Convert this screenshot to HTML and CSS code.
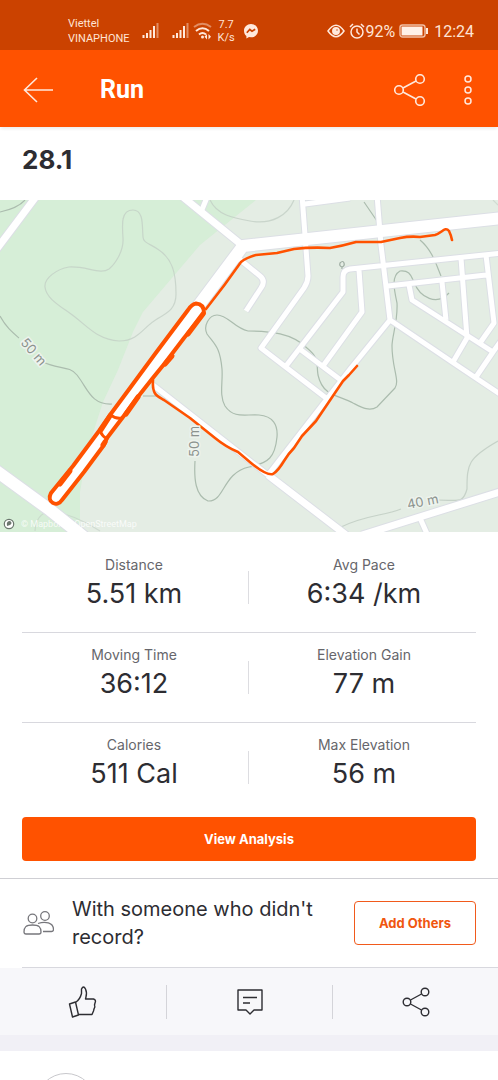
FILE: index.html
```html
<!DOCTYPE html>
<html lang="en">
<head>
<meta charset="utf-8">
<meta name="viewport" content="width=device-width, initial-scale=1">
<title>Run</title>
<link rel="stylesheet" href="styles.css">
</head>
<body>
<div class="status">
  <div class="carriers"><span>Viettel</span><span>VINAPHONE</span></div>
  <svg class="signals" width="72" height="18" viewBox="0 0 72 18" aria-hidden="true">
    <g stroke="#ffe9dc" stroke-width="2">
      <path d="M1.500 16v-3M5 16v-5M8.500 16v-8M12 16V4M31.500 16v-3M35 16v-5M38.500 16v-8M42 16V4"/>
      <path d="M15.500 16V1M45.500 16V1" opacity=".45"/>
    </g>
    <g fill="none" stroke="#ffe9dc" stroke-width="2">
      <path d="M52 5q8.500-6.500 17 0" opacity=".45"/>
      <path d="M54 9q6.500-5.500 13 0M57 12.500q3.500-3 7 0"/>
    </g>
    <circle cx="60.500" cy="15" r="1.500" fill="#ffe9dc"/>
    <path d="M65 12l-2.500 2.700 2.500 2.700zM66.500 12l2.500 2.700-2.500 2.700z" fill="#ffe9dc"/>
  </svg>
  <div class="speed"><span>7.7</span><span>K/s</span></div>
  <svg width="16" height="16" viewBox="0 0 16 16" aria-hidden="true">
    <path d="M8 1c4 0 7 3 7 6.700S12 14.300 8 14.300l-2-.2-2.600 1.300v-2.300C1.800 11.900 1 9.900 1 7.700 1 4 4 1 8 1z" fill="#ffe9dc"/>
    <path d="M3.800 9.800l3-3.300 2.200 1.700 3.200-2" fill="none" stroke="#cb4200" stroke-width="1.700"/>
  </svg>
  <div class="status-right">
    <svg width="18" height="14" viewBox="0 0 18 14" fill="none" stroke="#ffe9dc" stroke-width="1.500" aria-hidden="true">
      <path d="M1 7q8-11.500 16 0-8 11.500-16 0z"/><circle cx="9" cy="7" r="3.200" fill="#ffe9dc"/><circle cx="10" cy="6" r=".7" fill="#cb4200" stroke="none"/>
    </svg>
    <svg width="16" height="16" viewBox="0 0 16 16" fill="none" stroke="#ffe9dc" stroke-width="1.500" aria-hidden="true">
      <circle cx="8" cy="9" r="6"/><path d="M8 5.500V9l2.500 2.500M1 4l3-3M12 1l3 3"/>
    </svg>
    <span>92%</span>
    <svg class="battery" width="30" height="16" viewBox="0 0 30 16" aria-hidden="true">
      <rect x="1" y="2" width="25" height="12" rx="2.500" fill="none" stroke="#ffe9dc" stroke-width="1.400" opacity=".75"/>
      <rect x="2.500" y="3.500" width="21" height="9" fill="#fff1e9"/><rect x="27" y="5" width="2" height="6" fill="#ffe9dc"/>
    </svg>
    <span>12:24</span>
  </div>
</div>

<header class="topbar">
  <button class="icon-button" aria-label="Back"><svg width="30" height="26" viewBox="0 0 30 26" fill="none" stroke="#ffe9dc" stroke-width="1.600"><path d="M30 13H1.500M14 1L1.500 13 14 25"/></svg></button>
  <h1>Run</h1>
  <button class="icon-button" aria-label="Share"><svg width="32" height="32" viewBox="0 0 32 32" fill="none" stroke="#ffe9dc" stroke-width="1.600"><circle cx="5" cy="16" r="4.300"/><circle cx="26" cy="5" r="4.300"/><circle cx="26" cy="27" r="4.300"/><path d="M9 14l13-7M9 18l13 7"/></svg></button>
  <button class="icon-button more" aria-label="More options"><svg width="8" height="30" viewBox="0 0 8 30" fill="none" stroke="#ffe9dc" stroke-width="1.500"><circle cx="4" cy="4" r="3"/><circle cx="4" cy="15" r="3"/><circle cx="4" cy="26" r="3"/></svg></button>
</header>

<main>
  <h2 class="activity-name">28.1</h2>

  <svg class="map" viewBox="0 200 498 332" role="img" aria-label="Route map">
    <rect y="200" width="498" height="332" fill="#e4ede4"/>
    <path d="M0 200H256L200 245 143 312 133 332 118 370 103 402 87 452 80 492V532H0z" fill="#d6eed7"/>

    <g fill="none" stroke="#c2cec4" stroke-width="1.200">
      <path d="M0 212Q18 208 25 200" stroke="#abbcae"/>
      <path opacity=".75" d="M133 210c-12 0-11 14-10 28 1 14-9 27-14 31-9 6-22-3-40-2-12 2-25 11-24 20 1 12 17 20 30 30 14 11 24 23 44 24 20 0 24-14 38-22 12-7 19-11 19-25 0-22-4-35-17-44-8-6-16-7-16-13-1-11 1-27-10-27z"/>
      <path d="M210 200c7 15 23 18 40 21 22 4 38-6 44-21" opacity=".8"/>
      <path stroke="#abbcae" d="M0 316c6 11 12 16 19 22M41 361c17 9 28 4 36 14 11 14 14 30 35 29M143 396h14"/>
      <path stroke="#abbcae" d="M248 331c-14-3-20-16-31-16-8 0-14 11-10 19 8 11 13 13 15 35 1 14-3 26 3 37 9 13 20 8 34 9 14 1 19 10 18 22-2 20-8 26-28 30-27 6-24 35-41 34-13-5-14-23-13-40"/>
      <path stroke="#abbcae" d="M248 331c22 0 44 2 59 17 13 11 9 14 11 27 5 22 21 20 35 28 8 4 16 9 24 4l18-19c5-7-3-20-3-42 0-10 6-25 5-43-3-14-6-27 3-32 10-1 11 5 14 11 6 16 23 24 35 11M364 202l13 19M420 240c12 10 16 24 21 36"/>
      <path d="M341 527c24-12 42-11 60-18M437 500c22 0 26 4 30-11 0-25 1-31 31-48" opacity=".9"/>
      <path d="M35 531q1-17 15-20 24 3 50 20M493 200l5 5" opacity=".6"/>
      <path d="M340 263q3-3 4 0t-2 4q-3-1-2-4zM342 267v2" stroke="#9eaca2"/>
    </g>

    <defs>
      <g id="streets" fill="none" stroke-linejoin="round">
        <path d="M238 258L260 276Q266 281 261 288L246 311M302 195L305 235 308 276Q308 282 304 288L261 348 326 398M305 204L350 198M377 195L381 245 390 320 351 368 268 475M390 320L461 368 503 396M503 253L350 269Q343 270 343 277V292L286 366M359 270L362 312 323 366M301 350L342 381M388 286L486 275M461 258L467 338 453 362M486 255L494 323 480 343M442 282L446 320M409 285L412 300 493 352 503 338M493 352L476 377M208 195L201 212M420 518L428 536M153 385L268 475"/>
      </g>
      <g id="roads" fill="none">
        <path d="M-4 250L38 194M178 193L243 246M268 475L350 538M362 535L503 491"/>
      </g>
      <g id="mainroads" fill="none" stroke-linejoin="round">
        <path d="M-5 470L50 510 85 538M503 218L243 246 55 498"/>
      </g>
    </defs>
    <g stroke="#dcdfe5"><use href="#streets" stroke-width="7"/><use href="#roads" stroke-width="9"/><use href="#mainroads" stroke-width="14"/></g>
    <g stroke="#fff"><use href="#streets" stroke-width="5"/><use href="#roads" stroke-width="7"/><use href="#mainroads" stroke-width="12"/></g>

    <g fill="none" stroke="#ff5200" stroke-linejoin="round" stroke-linecap="round">
      <path stroke-width="2.600" d="M206 309Q225 285 241 262 246 258 256 255L277 253 294 249Q311 247 330 248 342 246 356 242L381 242 400 238Q410 236 420 237L435 235C442 233 445 226 449 231Q451 235 452 240"/>
      <path stroke-width="2.600" d="M153 380C152 395 157 396 164 400L190 418 215 438Q226 447 238 452L251 463Q267 476 273 474 278 471 284 461 288 454 294 448L302 436 316 421 343 381 349 375 357 366"/>
      <path id="laps" fill="#fff" stroke-width="4" d="M196 303.500Q192 304 188 310L155 354 130 388 110 415 99 431 73 466 51 493C46 502 57 508 62 500L84 472 104 445 107 438 123 417 137 398 152 379 165 363 184 338 204 313Q204 304 196 303.500z"/>
      <path stroke-width="5" d="M203 314L188 334M172 356L165 364M105 442L103 445M138 397L126 414M110 416L101 430M70 471L60 484"/>
      <path stroke-width="3" d="M111 415Q115 419 122 418M100 431Q102 436 107 439"/>
    </g>

    <g class="map-labels">
      <text transform="translate(20 343) rotate(49)">50 m</text>
      <text transform="translate(199 457) rotate(-90)">50 m</text>
      <text transform="translate(408 509) rotate(-11)">40 m</text>
    </g>
    <circle cx="9" cy="524" r="4.700" fill="#fff" stroke="#6b766e" stroke-width="1.200"/>
    <path d="M7 526q-1-5 3-5 3 2 0 4z" fill="#6b766e"/>
    <text class="credit" x="21" y="527">© Mapbox © OpenStreetMap</text>
  </svg>

  <dl class="stats">
    <div class="stat"><dt>Distance</dt><dd>5.51 km</dd></div>
    <div class="stat"><dt>Avg Pace</dt><dd>6:34 /km</dd></div>
    <div class="stat"><dt>Moving Time</dt><dd>36:12</dd></div>
    <div class="stat"><dt>Elevation Gain</dt><dd>77 m</dd></div>
    <div class="stat"><dt>Calories</dt><dd>511 Cal</dd></div>
    <div class="stat"><dt>Max Elevation</dt><dd>56 m</dd></div>
  </dl>

  <div class="analysis"><button class="primary">View Analysis</button></div>

  <section class="others">
    <svg width="32" height="24" viewBox="0 0 32 24" fill="none" stroke="#77777c" stroke-width="1.300" aria-hidden="true">
      <circle cx="10.500" cy="7.500" r="4.300"/><circle cx="23" cy="5" r="4.300"/>
      <path d="M4 23q-2 0-2-2c0-5 2-7 8.500-7s8.500 2 8.500 7q0 2-2 2zM16 12.500c7-2.500 15.500-1 15.500 6q0 2-2 2h-8.500"/>
    </svg>
    <p>With someone who didn't record?</p>
    <button class="outline">Add Others</button>
  </section>

  <div class="actions">
    <button aria-label="Give kudos"><svg width="30" height="32" viewBox="0 0 30 32" fill="none" stroke="#2d2d32" stroke-width="1.400" stroke-linejoin="round"><path d="M1.500 18l6-2 3 13-6 2zM7.500 16.500c3-2 5-5 6-9V3q2-4 4 0c2 4 1 6 0 10h8q3 1 1.500 4l-.5 2q1 2-.5 4l-.5 2-1.500 3.500h-13.500"/></svg></button>
    <button aria-label="Comment"><svg width="26" height="26" viewBox="0 0 26 26" fill="none" stroke="#2d2d32" stroke-width="1.400" stroke-linejoin="round"><path d="M1 1h24v20h-8l-4 4-4-4H1zM6 8.500h14M6 14h7"/></svg></button>
    <button aria-label="Share activity"><svg width="28" height="30" viewBox="0 0 28 30" fill="none" stroke="#2d2d32" stroke-width="1.400"><circle cx="5" cy="15" r="3.800"/><circle cx="23" cy="5" r="3.800"/><circle cx="23" cy="25" r="3.800"/><path d="M8.500 13l11-6M8.500 17l11 6"/></svg></button>
  </div>

  <section class="next-card"><div class="avatar"></div></section>
</main>
</body>
</html>
```
FILE: styles.css
```css
* { box-sizing: border-box; }
body {
  margin: 0;
  height: 100vh;
  display: flex;
  flex-direction: column;
  overflow: hidden;
  background: #fff;
  color: #2d2d32;
  font-family: Inter, "Liberation Sans", sans-serif;
}
button { margin: 0; padding: 0; border: 0; background: none; font: inherit; cursor: pointer; }
svg { display: block; flex: none; }
h1, h2, p, dl, dd { margin: 0; }

.status {
  display: flex;
  align-items: center;
  height: 50px;
  padding: 12px 24px 0 68px;
  background: #cb4200;
  color: #ffe4d5;
  font-family: Roboto, sans-serif;
}
.carriers, .speed { display: flex; flex-direction: column; font-size: 11px; line-height: 15px; }
.signals { margin-left: 12px; }
.speed { margin: 0 8px 0 4px; line-height: 13px; align-items: center; }
.status-right { display: flex; align-items: center; margin-left: auto; font-size: 16px; }
.status-right svg + svg { margin-left: 4px; }
.status-right .battery { margin: 0 5px 0 4px; }

.topbar {
  display: flex;
  align-items: center;
  height: 77px;
  padding: 2px 20px 0 23px;
  background: #ff5200;
  box-shadow: 0 3px 3px -1px #eeeeee;
}
.topbar h1 {
  flex: 1;
  margin-left: 47px;
  color: #fff;
  font: 700 25px/32px Roboto, sans-serif;
}
.icon-button { display: flex; align-items: center; justify-content: center; }
.more { width: 20px; margin-left: 32px; }

main { flex: 1; display: flex; flex-direction: column; min-height: 0; }
.activity-name {
  padding: 17px 22px 24px;
  font-size: 26px;
  line-height: 32px;
  font-weight: 700;
}
.map { width: 100%; height: auto; }
.map-labels text {
  font: 13px Inter, sans-serif;
  fill: #8b928d;
  stroke: #edf3ed;
  stroke-width: 3px;
  paint-order: stroke;
}
.credit { font: 9px Roboto, sans-serif; fill: #fff; opacity: .8; }

.stats { display: grid; grid-template-columns: 1fr 1fr; padding: 10px 22px 0; }
.stat {
  position: relative;
  height: 90px;
  padding: 12px 0 0 3px;
  text-align: center;
  border-top: 1px solid #d8d8de;
}
.stat:nth-child(odd) { padding: 12px 3px 0 0; }
.stat:nth-child(-n+2) { border-top-color: transparent; }
.stat dt { font-size: 14px; line-height: 20px; color: #66666b; }
.stat dd { font-size: 27px; line-height: 38px; }
.stat:nth-child(odd)::after {
  content: "";
  position: absolute;
  right: 0;
  top: 28px;
  width: 1px;
  height: 33px;
  background: #dddde1;
}

.analysis { padding: 5px 22px 17px; border-bottom: 1px solid #cfcfd4; }
.primary {
  width: 100%;
  height: 44px;
  border-radius: 4px;
  background: #ff5200;
  color: #fff;
  font-size: 13px;
  font-weight: 700;
}

.others {
  display: flex;
  align-items: center;
  height: 89px;
  margin-left: 22px;
  padding-right: 22px;
  border-bottom: 1px solid #d8d8de;
}
.others p { flex: 1; margin: 0 24px 0 18px; font-size: 20px; line-height: 28px; }
.outline {
  width: 122px;
  height: 44px;
  border: 1px solid #f15a1c;
  border-radius: 4px;
  color: #f0560f;
  font-size: 13px;
  font-weight: 700;
}

.actions {
  display: grid;
  grid-template-columns: repeat(3, 1fr);
  padding: 17px 0 16px;
  background: #f7f7fa;
}
.actions button { display: flex; align-items: center; justify-content: center; height: 34px; }
.actions button + button { border-left: 1px solid #d4d4d9; }

.next-card {
  flex: 1 1 0;
  min-height: 0;
  overflow: hidden;
  padding: 22px 36px 0;
  border-top: 16px solid #f1f0f6;
}
.avatar { width: 60px; height: 60px; border: 1px solid #c8c8cc; border-radius: 50%; }
```
